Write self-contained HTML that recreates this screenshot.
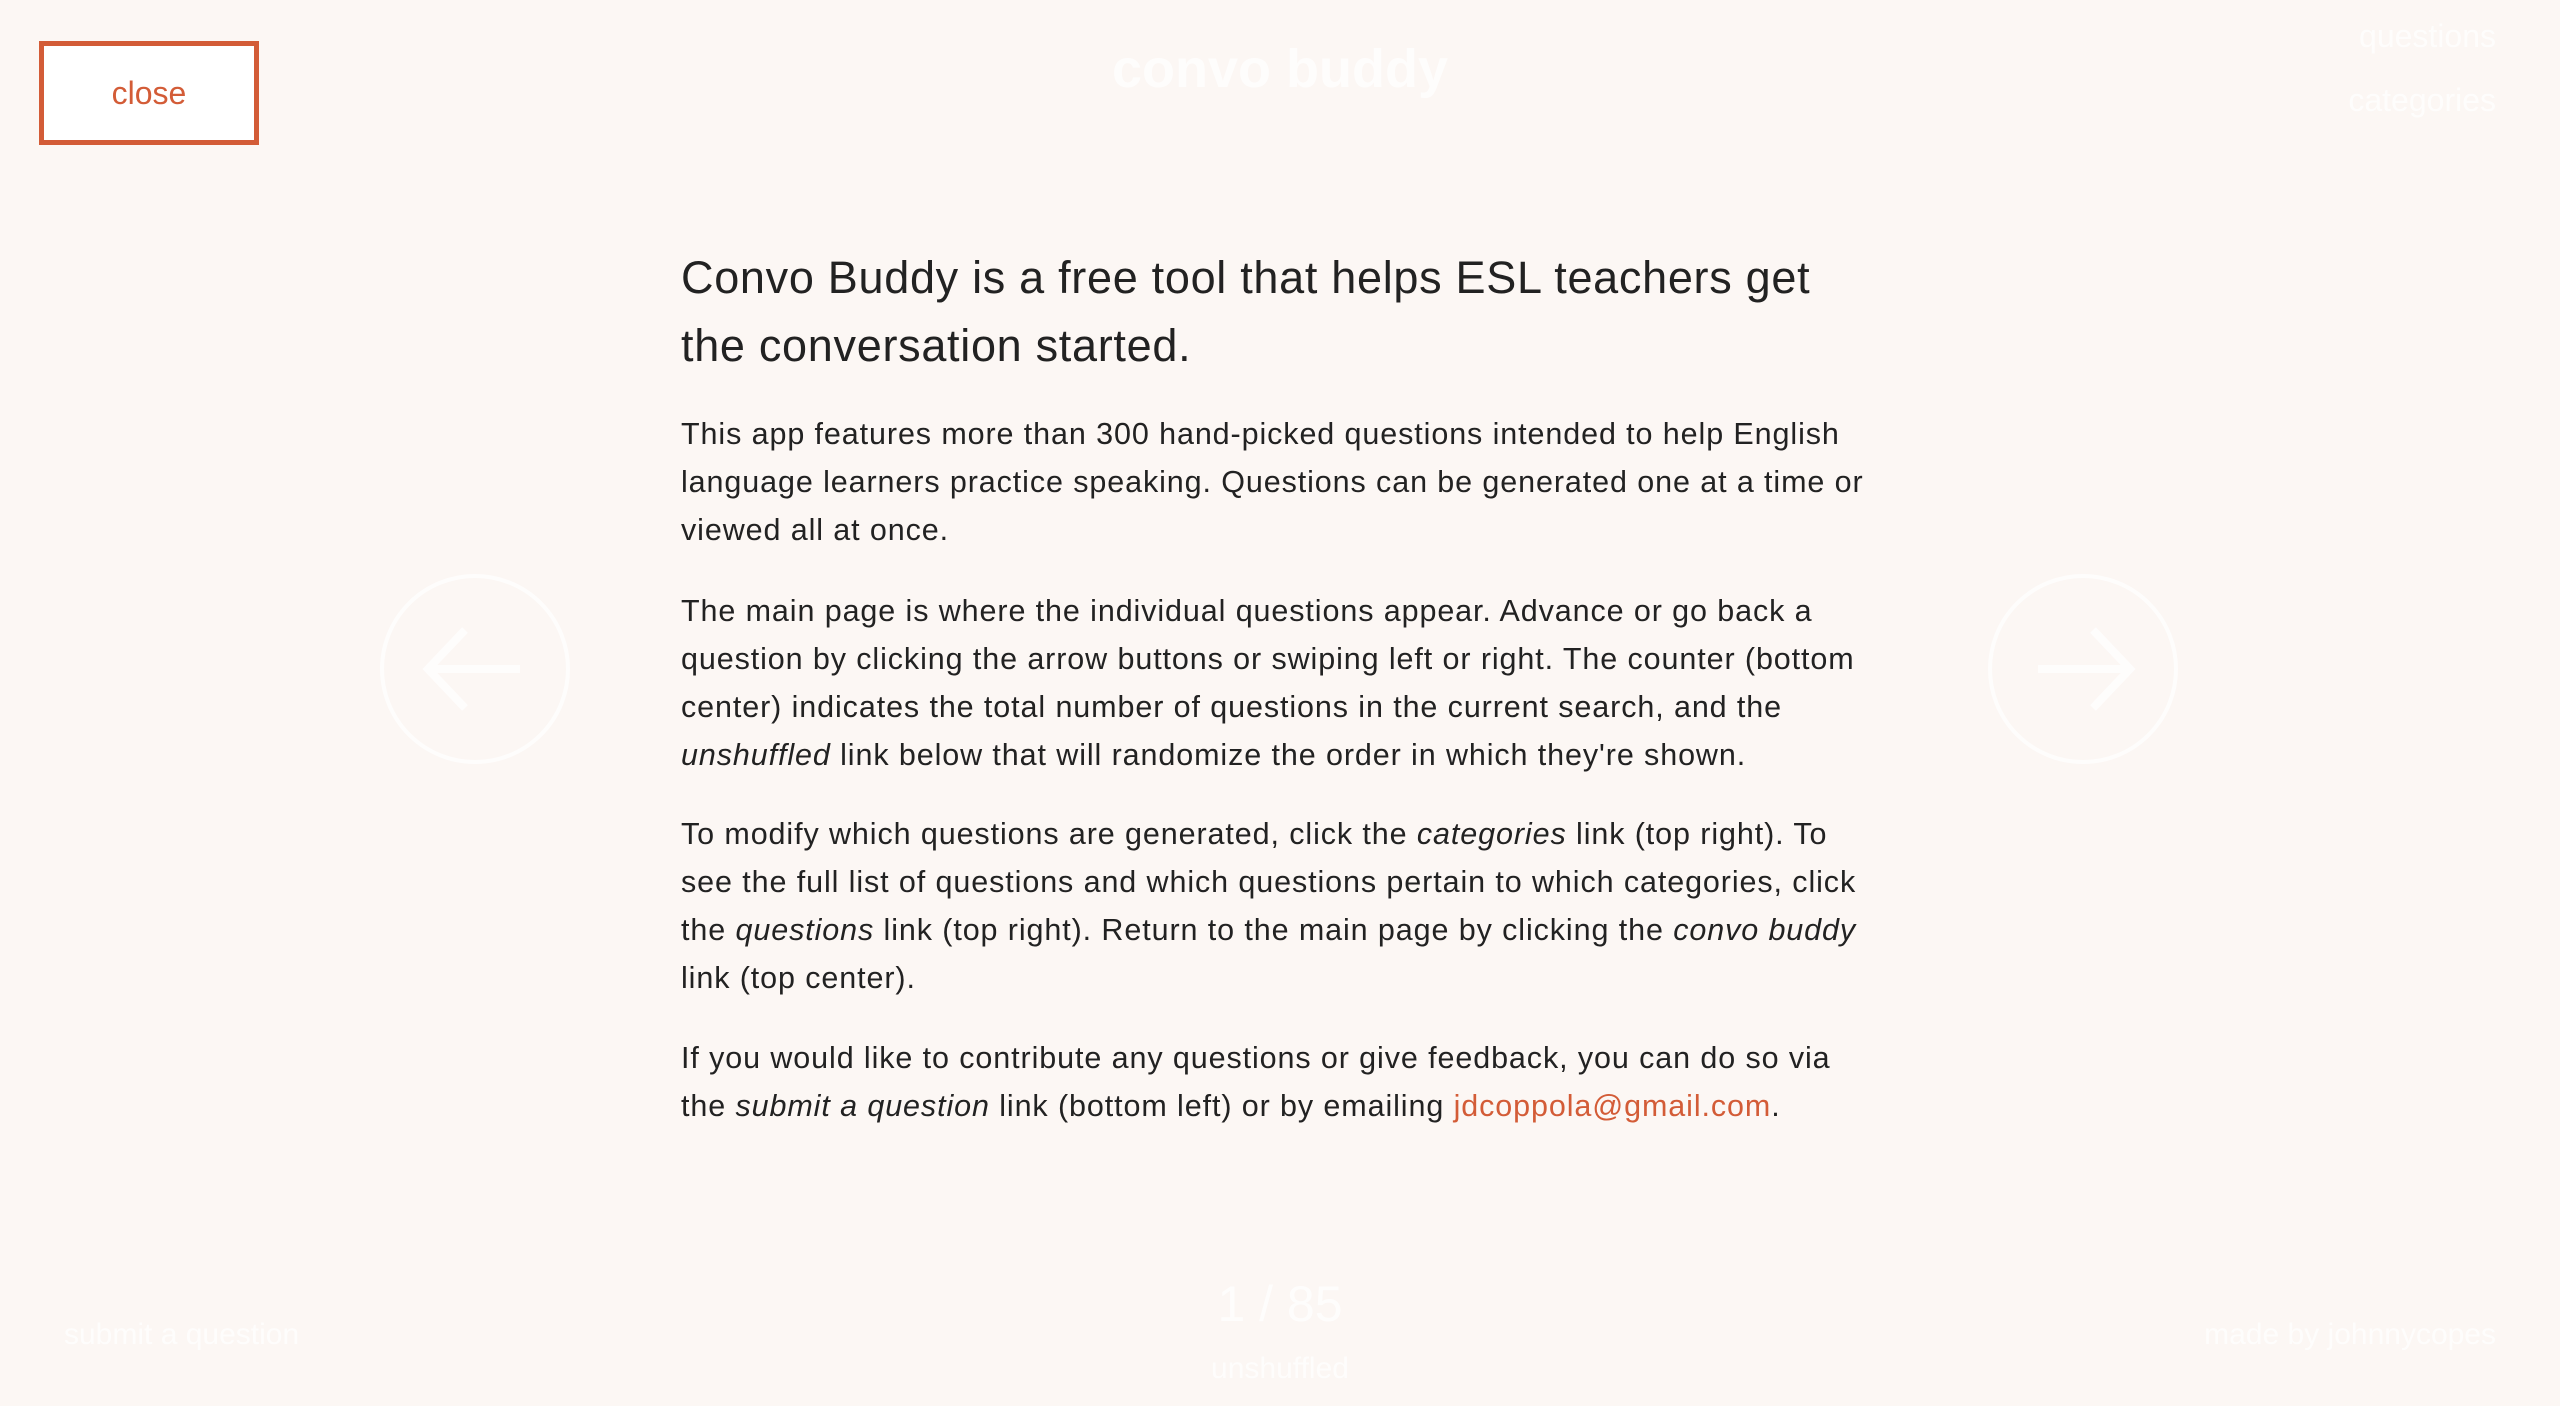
<!DOCTYPE html>
<html><head><meta charset="utf-8"><style>
html,body{margin:0;padding:0;width:2560px;height:1406px;background:#fcf7f4;overflow:hidden;font-family:"Liberation Sans",sans-serif;}
.abs{position:absolute;white-space:nowrap}
.close{left:39px;top:41px;width:210px;height:94px;border:5px solid #d35c37;background:#fff;color:#d35c37;font-size:32px;text-align:center;line-height:94px;}
.faint{color:rgba(255,255,255,0.75);}
h1{position:absolute;left:681px;top:244px;margin:0;font-weight:normal;font-size:45px;line-height:68px;color:#222;white-space:nowrap;letter-spacing:0.7px}
.p{position:absolute;left:681px;font-size:30.5px;line-height:48px;color:#222;white-space:nowrap;letter-spacing:0.9px}
a{color:#d35c37;text-decoration:none}
</style></head><body>
<div class="abs close">close</div>
<div class="abs faint" style="left:0;width:2560px;text-align:center;top:38px;font-size:54px;font-weight:bold">convo buddy</div>
<div class="abs faint" style="right:64px;top:18px;font-size:32px">questions</div>
<div class="abs faint" style="right:64px;top:82px;font-size:32px">categories</div>
<svg class="abs" style="left:0;top:0" width="2560" height="1406">
<g opacity="0.75">
<circle cx="475" cy="669" r="93" fill="none" stroke="#fff" stroke-width="4"/>
<path d="M520 669H430M465 630L428 669L465 708" fill="none" stroke="#fff" stroke-width="8"/>
<circle cx="2083" cy="669" r="93" fill="none" stroke="#fff" stroke-width="4"/>
<path d="M2038 669H2128M2093 630L2130 669L2093 708" fill="none" stroke="#fff" stroke-width="8"/>
</g>
</svg>
<h1>Convo Buddy is a free tool that helps ESL teachers get<br>the conversation started.</h1>
<div class="p" style="top:410px">This app features more than 300 hand-picked questions intended to help English<br>language learners practice speaking. Questions can be generated one at a time or<br>viewed all at once.</div>
<div class="p" style="top:587px">The main page is where the individual questions appear. Advance or go back a<br>question by clicking the arrow buttons or swiping left or right. The counter (bottom<br>center) indicates the total number of questions in the current search, and the<br><i>unshuffled</i> link below that will randomize the order in which they're shown.</div>
<div class="p" style="top:810px">To modify which questions are generated, click the <i>categories</i> link (top right). To<br>see the full list of questions and which questions pertain to which categories, click<br>the <i>questions</i> link (top right). Return to the main page by clicking the <i>convo buddy</i><br>link (top center).</div>
<div class="p" style="top:1034px">If you would like to contribute any questions or give feedback, you can do so via<br>the <i>submit a question</i> link (bottom left) or by emailing <a>jdcoppola@gmail.com</a>.</div>
<div class="abs faint" style="left:0;width:2560px;text-align:center;top:1275px;font-size:50px">1 / 85</div>
<div class="abs faint" style="left:0;width:2560px;text-align:center;top:1352px;font-size:30px">unshuffled</div>
<div class="abs faint" style="left:64px;top:1318px;font-size:30px">submit a question</div>
<div class="abs faint" style="right:64px;top:1318px;font-size:30px">made by johnnycopes</div>
</body></html>
